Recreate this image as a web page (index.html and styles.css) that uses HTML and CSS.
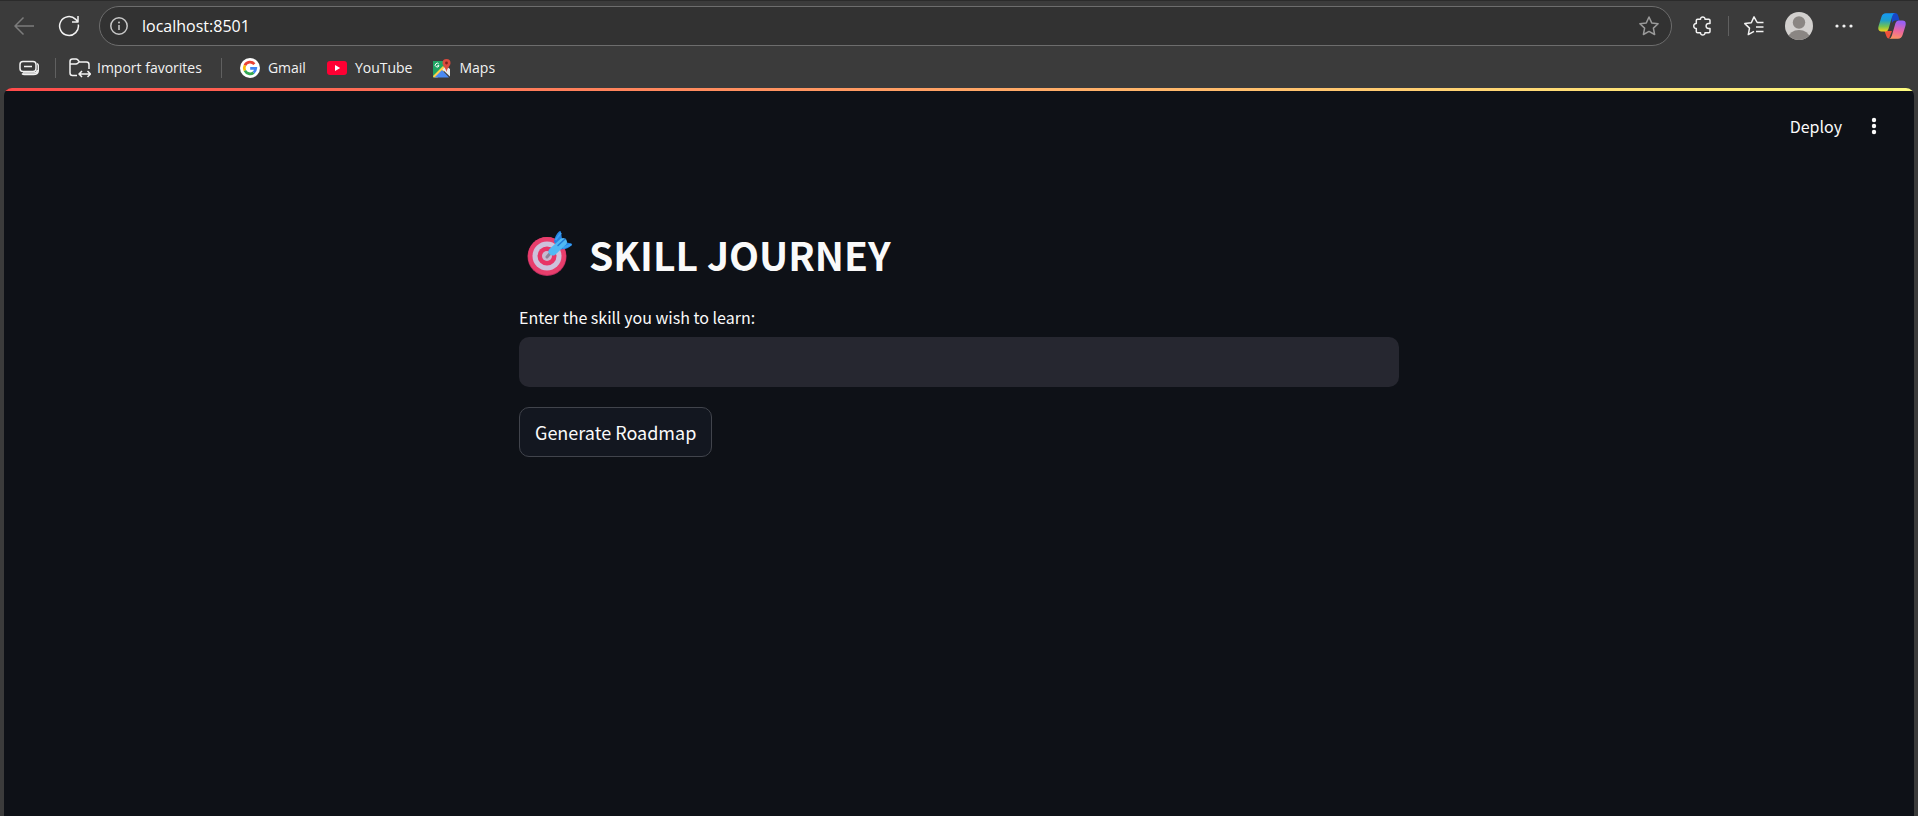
FILE: index.html
```html
<!DOCTYPE html>
<html lang="en">
<head>
<meta charset="utf-8">
<title>Skill Journey</title>
<link rel="stylesheet" href="styles.css">
</head>
<body>
<header class="browser">
  <nav class="toolbar" aria-label="Browser toolbar">
    <button class="icon-btn back" aria-label="Back" disabled>
      <svg width="20" height="20" viewBox="0 0 20 20"><path d="M20 10H1M9.500 1.500 1 10l8.500 8.500"/></svg>
    </button>
    <button class="icon-btn reload" aria-label="Refresh">
      <svg width="22" height="22" viewBox="0 0 22 22"><path d="M20.300 9.500A9.400 9.400 0 1 1 17.700 4.400L20 6.800M20 1v6h-6"/></svg>
    </button>
    <div class="address">
      <svg class="info" width="18" height="18" viewBox="0 0 18 18"><circle cx="9" cy="9" r="8.200"/><path d="M9 8v5"/><circle class="dot" cx="9" cy="5.500" r="1"/></svg>
      <input class="url" type="text" value="localhost:8501" aria-label="Address">
      <button class="icon-btn favorite" aria-label="Add to favorites">
        <svg width="20" height="20" viewBox="0 0 20 20"><path d="M10 1l2.700 5.900 6.400.8-4.700 4.400 1.200 6.400L10 15.400l-5.600 3.100 1.200-6.400L.9 7.700l6.400-.8z"/></svg>
      </button>
    </div>
    <div class="actions">
      <button class="icon-btn" aria-label="Extensions">
        <svg width="20" height="20" viewBox="0 0 20 20"><path d="M4.500 3.200h3c-.1-3 4.600-3 4.500 0h3.800q1.200 0 1.200 1.200v3h-1.500c-3.200-.2-3.200 5.400 0 5.200H17v3q0 1.200-1.200 1.200H12c.1 3-4.600 3-4.500 0h-3q-1.200 0-1.200-1.200v-3c-3.400.2-3.400-5.400 0-5.200v-3q0-1.200 1.200-1.200z"/></svg>
      </button>
      <span class="divider"></span>
      <button class="icon-btn" aria-label="Favorites">
        <svg width="20" height="20" viewBox="0 0 20 20"><path d="M19.500 6.500h-6.300L10 .9 7.300 6.800.8 7.600l4.700 4.500-1.200 6.500L10 15.300M12 11h7.500M12 15.500h7.500"/></svg>
      </button>
      <button class="icon-btn avatar" aria-label="Profile">
        <svg width="28" height="28" viewBox="0 0 28 28"><defs><clipPath id="face"><circle cx="14" cy="14" r="14"/></clipPath></defs><g clip-path="url(#face)"><rect width="28" height="28" fill="#d2d0ce"/><circle cx="14" cy="10.500" r="6.200" fill="#8a8683"/><ellipse cx="14" cy="25.500" rx="10.500" ry="7.500" fill="#8a8683"/></g></svg>
      </button>
      <button class="icon-btn more" aria-label="Settings and more">
        <svg width="18" height="4" viewBox="0 0 18 4"><circle cx="2" cy="2" r="1.600"/><circle cx="9" cy="2" r="1.600"/><circle cx="16" cy="2" r="1.600"/></svg>
      </button>
      <button class="icon-btn copilot" aria-label="Copilot">
        <svg width="28" height="26" viewBox="0 0 28 26">
          <defs>
            <linearGradient id="cool" x1="0" y1="0" x2="0" y2="1"><stop offset="0" stop-color="#1599f5"/><stop offset=".4" stop-color="#1f9fc9"/><stop offset=".72" stop-color="#73c252"/><stop offset="1" stop-color="#f5d21b"/></linearGradient>
            <linearGradient id="warm" x1=".2" y1="0" x2="0" y2="1"><stop offset="0" stop-color="#9a60f5"/><stop offset=".5" stop-color="#ec679c"/><stop offset="1" stop-color="#ff9a59"/></linearGradient>
          </defs>
          <path d="M13 0h4q2.500 0 3.300 3l1.300 4.500H17q-2 0-3 2.500z" fill="#1746c8"/>
          <path d="M6.500 18H14l-3 7.500q-2 0-2.700-2.500z" fill="#f0503c"/>
          <path d="M8 .3h9q-2 .2-2.800 3L10.500 16q-.8 2.500-3 2.500H3.500Q-.8 18.500.6 13L3.400 4Q4.500.3 8 .3z" fill="url(#cool)"/>
          <path d="M20 25.700h-9q2-.2 2.800-3L17.500 10q.8-2.500 3-2.500h4q4.300 0 2.900 5.500l-2.800 9q-1.100 3.700-4.600 3.700z" fill="url(#warm)"/>
        </svg>
      </button>
    </div>
  </nav>
  <nav class="bookmarks" aria-label="Favorites bar">
    <button class="icon-btn" aria-label="Tab groups">
      <svg width="20" height="16" viewBox="0 0 20 16"><rect x="1" y="1.500" width="16" height="10" rx="3"/><path d="M5 6.500h8M3 13.500q.8 1 2.500 1h9q4.800 0 4.800-4.500V6q0-1.600-1.200-2.500"/><path d="M4 13h11q3.300 0 3.300-3"/></svg>
    </button>
    <span class="divider"></span>
    <a class="bookmark import" href="#">
      <svg class="line" width="22" height="20" viewBox="0 0 22 20"><path d="M8 17.500H3.500Q1 17.500 1 15V3.500Q1 1 3.500 1H7q1 0 1.700.8L10.500 4h7Q20 4 20 6.500V11M1 6h6q1 0 1.700-.7L10.200 4M11 16h10M13 13l-3 3 3 3M18.500 13l3 3-3 3"/></svg>
      Import favorites
    </a>
    <span class="divider"></span>
    <a class="bookmark gmail" href="#">
      <svg width="20" height="20" viewBox="0 0 20 20"><circle cx="10" cy="10" r="10" fill="#fff"/><g fill="none" stroke-width="2.700"><path d="M14.400 6.100A5.800 5.800 0 0 0 4.900 7.300" stroke="#ea4335"/><path d="M4.900 7.300a5.800 5.800 0 0 0 0 5.400" stroke="#fbbc05"/><path d="M4.900 12.700a5.800 5.800 0 0 0 8.700 1.900" stroke="#34a853"/><path d="M13.600 14.600a5.800 5.800 0 0 0 2.200-4.300H10.200" stroke="#4285f4"/></g></svg>
      Gmail
    </a>
    <a class="bookmark" href="#">
      <svg width="20" height="14" viewBox="0 0 20 14"><rect width="20" height="14" rx="3" fill="#ff0033"/><path d="M8 4l5.200 3L8 10z" fill="#fff"/></svg>
      YouTube
    </a>
    <a class="bookmark maps" href="#">
      <svg width="18" height="19" viewBox="0 0 18 19"><path d="M0 2h12v8L1 18.500H0z" fill="#1fa463"/><path d="M0 17 10 7l3 3-8.500 8.500H1.500Q0 18.500 0 17z" fill="#ffd04b"/><path d="M1.500 18.500 9 11l7 7.500z" fill="#4a89f3"/><path d="M9.500 10.500 13 7l4 3v7.500z" fill="#e8eaed"/><path d="M5.800 5.100A1.900 1.900 0 1 0 6 6.700H4.300" fill="none" stroke="#fff"/><path d="M13.500 0a4 4 0 0 1 4 4c0 3-3 4-4 9-1-5-4-6-4-9a4 4 0 0 1 4-4z" fill="#dc4b3e"/><circle cx="13.500" cy="4" r="1.400" fill="#7b231d"/></svg>
      Maps
    </a>
  </nav>
</header>
<div class="app">
  <div class="decoration"></div>
  <header class="app-bar">
    <button class="deploy">Deploy</button>
    <button class="menu" aria-label="Main menu">
      <svg width="6" height="18" viewBox="0 0 6 18"><circle cx="3" cy="3" r="2.200"/><circle cx="3" cy="9" r="2.200"/><circle cx="3" cy="15" r="2.200"/></svg>
    </button>
  </header>
  <main class="content">
    <h1 class="title">
      <svg width="46" height="46" viewBox="0 0 46 46" aria-hidden="true">
        <ellipse cx="20" cy="25.500" rx="19.500" ry="19.500" fill="#b92d5e"/>
        <circle cx="20" cy="25" r="19" fill="#e83e6c"/>
        <circle cx="20" cy="25" r="14.500" fill="#cdc2dc"/>
        <circle cx="20" cy="25" r="9.500" fill="#e83566"/>
        <circle cx="20" cy="25" r="5" fill="#c8b9d0"/>
        <path d="M20 26 26 19" stroke="#8d8399" stroke-width="3" stroke-linecap="round"/>
        <path d="M27 11q1-7 5-10.500 1.500-1 2 .5L35 8l3 3 6 1.500q2 .5.500 2Q40 19 33 18z" fill="#2584e4"/>
        <path d="M28.500 9 34 2M36 17l8-3.500" stroke="#3aa0f2" stroke-width="2"/>
        <path d="M23 17.500 34 7.500q3-1.500 5 1t0 5L28 24q-3 1.500-5.500-1t.5-5.500z" fill="#50b9f4"/>
        <path d="M31 14.500 38 8" stroke="#217bd7" stroke-width="1.500" stroke-linecap="round"/>
      </svg>
      <span>SKILL JOURNEY</span>
    </h1>
    <form class="skill-form">
      <label class="label" for="skill">Enter the skill you wish to learn:</label>
      <input class="field" id="skill" type="text">
      <button class="generate" type="button">Generate Roadmap</button>
    </form>
  </main>
</div>
</body>
</html>
```
FILE: styles.css
```css
* {
  box-sizing: border-box;
}

body {
  margin: 0;
  min-height: 100vh;
  display: flex;
  flex-direction: column;
  background: #3b3b3b;
  color: #fff;
  font-family: "Open Sans", "Noto Sans", sans-serif;
}

button,
input {
  font: inherit;
  color: inherit;
  border: 0;
  padding: 0;
  background: none;
}

svg {
  display: block;
  flex: none;
}

.browser {
  border-top: 1px solid #2b2b2b;
  padding-bottom: 10px;
}

.toolbar {
  display: flex;
  align-items: center;
  padding: 5px 12px 0 14px;
}

.icon-btn {
  display: block;
  flex: none;
}

.icon-btn svg {
  fill: none;
  stroke: #f2f2f2;
  stroke-width: 1.5;
  stroke-linejoin: round;
}

.icon-btn.back svg {
  stroke: #7c7c7c;
}

.icon-btn.reload {
  margin: 0 19px 0 24px;
}

.address {
  flex: 1;
  display: flex;
  align-items: center;
  height: 40px;
  padding: 0 12px 0 10px;
  border: 1px solid #6d6d6d;
  border-radius: 20px;
  background: #323232;
}

.info {
  fill: none;
  stroke: #c8c8c8;
  stroke-width: 1.5;
}

.info .dot {
  fill: #c8c8c8;
  stroke: none;
}

.url {
  flex: 1;
  margin-left: 14px;
  font-size: 16px;
  line-height: 24px;
}

.favorite svg {
  stroke: #9a9a9a;
}

.actions {
  display: flex;
  align-items: center;
  padding-left: 21px;
}

.divider {
  width: 1px;
  height: 20px;
  background: #606060;
}

.actions .divider {
  margin: 0 15px;
}

.icon-btn.avatar {
  margin: 0 22px 0 21px;
}

.avatar svg,
.copilot svg {
  stroke: none;
}

.icon-btn.more svg {
  fill: #f2f2f2;
  stroke: none;
}

.icon-btn.copilot {
  margin-left: 25px;
}

.bookmarks {
  display: flex;
  align-items: center;
  height: 20px;
  margin-top: 12px;
  padding-left: 19px;
  font-size: 14px;
  line-height: 20px;
}

.bookmarks .divider {
  margin: 0 13px 0 16px;
}

.bookmarks .import + .divider {
  margin: 0 18px 0 19px;
}

.bookmark {
  display: flex;
  align-items: center;
  gap: 8px;
  margin-right: 21px;
  color: #f2f2f2;
  text-decoration: none;
}

.bookmark.import {
  gap: 6px;
  margin-right: 0;
}

.line {
  fill: none;
  stroke: #f2f2f2;
  stroke-width: 1.5;
  stroke-linejoin: round;
}

.app {
  flex: 1;
  margin: 0 4px;
  overflow: hidden;
  border-radius: 8px 8px 0 0;
  background: #0e1117;
  color: #fafafa;
  font-family: "Noto Sans CJK SC", "Noto Sans", sans-serif;
}

.decoration {
  height: 3px;
  background: linear-gradient(90deg, #ff4b4b, #fffd80);
}

.app-bar {
  display: flex;
  justify-content: flex-end;
  align-items: center;
  height: 70px;
  padding-right: 37px;
}

.deploy {
  font-size: 16px;
  line-height: 24px;
}

.menu {
  margin-left: 29px;
  fill: #fafafa;
}

.content {
  max-width: 880px;
  margin: 0 auto;
  padding-top: 63px;
}

.title {
  display: flex;
  align-items: center;
  gap: 16px;
  margin: 0;
  padding-left: 8px;
  font-size: 39px;
  line-height: 60px;
  font-weight: 700;
}

.skill-form {
  display: flex;
  flex-direction: column;
  align-items: flex-start;
  padding-top: 21px;
}

.label {
  margin-bottom: 8px;
  font-size: 16px;
  line-height: 24px;
}

.field {
  width: 100%;
  height: 50px;
  padding: 0 16px;
  border-radius: 10px;
  background: #262730;
}

.generate {
  height: 50px;
  margin-top: 20px;
  padding: 0 15px;
  border: 1px solid #41444c;
  border-radius: 10px;
  background: #131720;
  font-size: 18px;
  line-height: 24px;
}
```
